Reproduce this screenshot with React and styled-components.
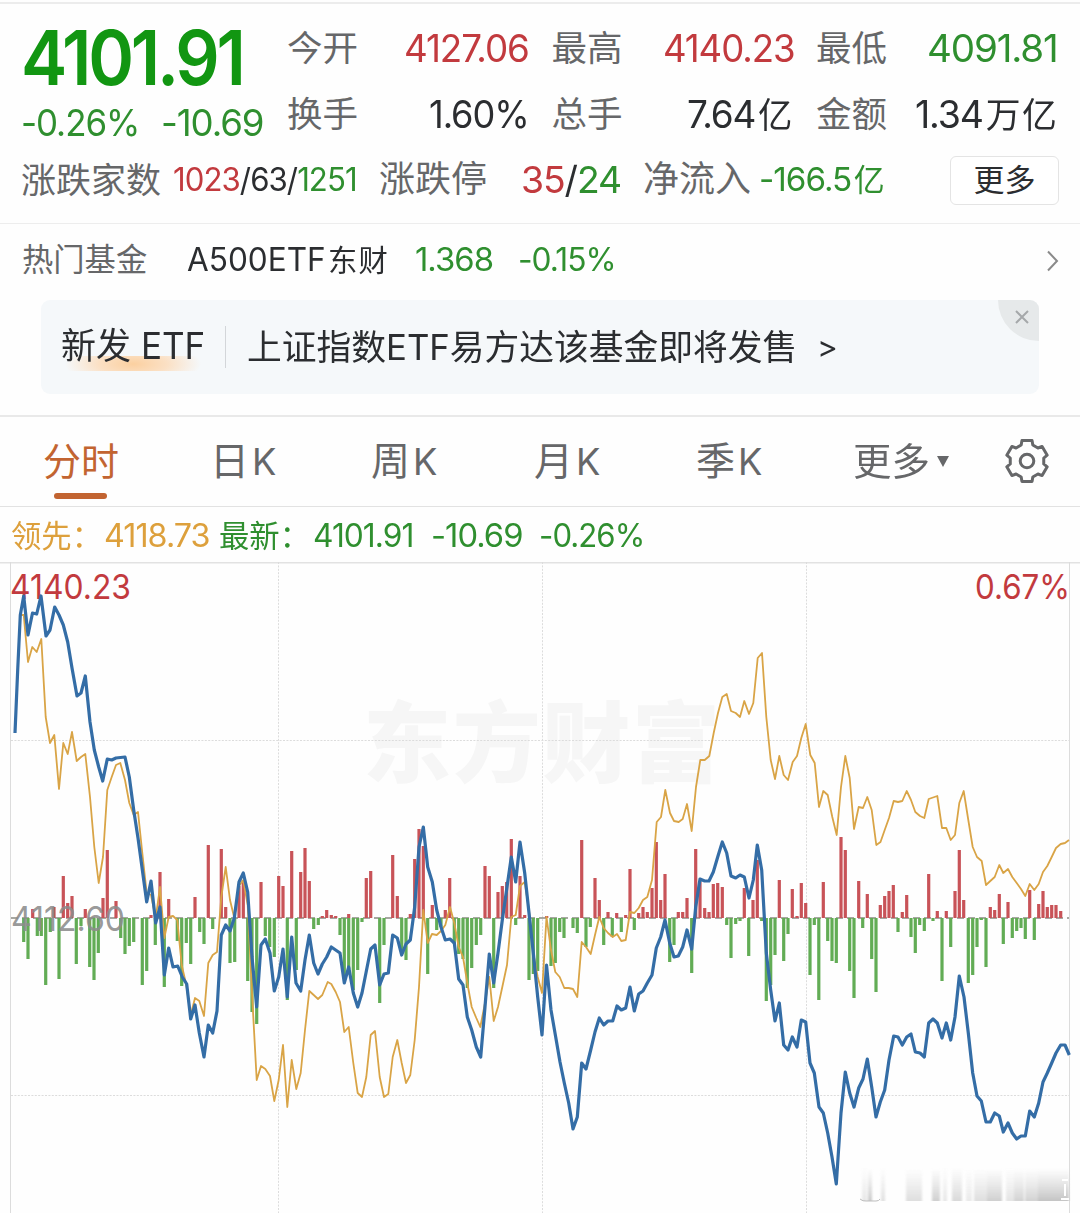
import React, { useLayoutEffect, useRef, useState } from "react";
import styled, { createGlobalStyle } from "styled-components";

const RED = "#c23a3e";
const GREEN = "#2f8f2f";
const INK = "#2b2d30";
const MUTED = "#666769";

const GlobalStyle = createGlobalStyle`
  * { box-sizing: border-box; }
  body { margin: 0; background: #fefefe; font-family: Inter, "Noto Sans CJK SC", sans-serif; }
`;

const Page = styled.main`
  width: 1080px;
  height: 1213px;
  overflow: hidden;
  display: flex;
  flex-direction: column;
  border-top: 2px solid #fefefe;
`;

/* Text stretched to a given advance width */
const Slot = styled.span`
  display: block;
  flex: none;
  width: ${(p) => p.$w}px;
  margin-left: ${(p) => p.$ml || 0}px;
  font-size: ${(p) => p.$size}px;
  font-weight: ${(p) => p.$weight || 400};
  color: ${(p) => p.$color || "inherit"};
  line-height: 1.2;
  white-space: nowrap;
`;
const Stretch = styled.span`
  display: block;
  width: max-content;
  transform-origin: 0 50%;
  letter-spacing: ${(p) => p.$ls}em;
`;
function Fit({ w, ml, size, weight, color, ls = -0.03, children }) {
  const ref = useRef(null);
  const [scale, setScale] = useState(1);
  useLayoutEffect(() => {
    setScale(w / ref.current.offsetWidth);
  }, [w]);
  return (
    <Slot $w={w} $ml={ml} $size={size} $weight={weight} $color={color}>
      <Stretch ref={ref} $ls={ls} style={{ transform: `scaleX(${scale})` }}>
        {children}
      </Stretch>
    </Slot>
  );
}
const Tint = styled.span`
  color: ${(p) => p.$color};
`;
const Unit = styled.span`
  margin-left: 0.08em;
  font-size: 0.93em;
  letter-spacing: 0.04em;
`;

const Quote = styled.section`
  height: 222px;
  border-top: 2px solid #ececec;
  border-bottom: 1px solid #ededed;
  padding: 12px 21px 0;
`;
const QuoteTop = styled.div`
  display: flex;
  height: 132px;
`;
const Headline = styled.div`
  width: 266px;
  display: flex;
  flex-direction: column;
`;
const Price = styled.div`
  height: 84px;
  display: flex;
  align-items: center;
`;
const Change = styled.div`
  height: 47px;
  display: flex;
  align-items: center;
`;
const Stats = styled.div`
  flex: 1;
  display: grid;
  grid-template-columns: 242px 242px 242px;
  column-gap: 22.5px;
  grid-template-rows: 66px 66px;
`;
const Stat = styled.div`
  display: flex;
  align-items: center;
  justify-content: space-between;
`;
const Breadth = styled.div`
  height: 64px;
  display: flex;
  align-items: center;
`;
const MoreButton = styled.button`
  width: 109px;
  height: 49px;
  margin-left: auto;
  padding: 0;
  display: flex;
  align-items: center;
  justify-content: center;
  background: #fff;
  border: 1.5px solid #e4e4e4;
  border-radius: 6px;
  color: ${INK};
  font-family: inherit;
`;

const FundRow = styled.section`
  height: 76px;
  padding: 0 22px 3px;
  display: flex;
  align-items: center;
  svg { margin-left: auto; margin-right: -1px; }
`;
const Banner = styled.section`
  position: relative;
  width: 998px;
  height: 94px;
  margin: 0 0 21px 41px;
  padding-left: 20px;
  display: flex;
  align-items: center;
  background: #f5f8fa;
  border-radius: 9px;
  color: ${INK};
`;
const BannerTag = styled.div`
  height: 94px;
  display: flex;
  align-items: center;
  background: radial-gradient(ellipse 68px 22px at 72px 8px, #fbd0a0 0%, #fbe0c4 50%, rgba(245, 248, 250, 0) 100%) 0 56px / 144px 15px no-repeat;
`;
const Divider = styled.div`
  width: 1px;
  height: 42px;
  margin-left: 20px;
  background: #d3d6d9;
`;
const CloseTab = styled.div`
  position: absolute;
  top: 0;
  right: 0;
  width: 41px;
  height: 41px;
  padding: 10px 0 0 17px;
  background: #e6e9ea;
  border-radius: 0 9px 0 41px;
  svg { display: block; }
`;

const Tabs = styled.nav`
  height: 92px;
  border-top: 2px solid #e9e9e9;
  border-bottom: 1px solid #e2e2e2;
  display: grid;
  grid-template-columns: repeat(6, 162px) 1fr;
`;
const Tab = styled.div`
  display: flex;
  align-items: center;
  justify-content: center;
  position: relative;
  padding-left: ${(p) => p.$shift || 0}px;
  color: ${(p) => (p.$active ? "#c26431" : MUTED)};
  &::after {
    content: "";
    display: ${(p) => (p.$active ? "block" : "none")};
    position: absolute;
    left: 54px;
    bottom: 7px;
    width: 53px;
    height: 6px;
    border-radius: 3px;
    background: #c26431;
  }
`;
const Caret = styled.span`
  width: 0;
  height: 0;
  margin-left: 7px;
  border: 6.5px solid transparent;
  border-top: 11px solid ${MUTED};
  border-bottom: 0;
`;
const Settings = styled.div`
  display: flex;
  align-items: center;
  padding: 0 0 2px 30.500px;
`;

const Legend = styled.section`
  height: 55px;
  padding: 3px 0 0 11px;
  display: flex;
  align-items: center;
`;
const ChartSvg = styled.svg`
  display: block;
  flex: none;
  font-family: Inter, "Noto Sans CJK SC", sans-serif;
`;

/* x centre and signed height of every volume-delta bar */
const BARS = [
  [32.7,9],[54,11],[63.3,42],[67.7,15],[72,22],[85.3,9],[103,20],[107.3,68],[116,17],[151,3],[160,46],[168.7,19],[195,21],[208.3,73],[221.3,69],[225.7,11],[239,32],[243.3,38],[261,36],
  [23.7,-24],[28,-41],[37.3,-18],[41.3,-18],[45.7,-67],[50.3,-14],[59,-61],[76.3,-46],[81,-8],[89.7,-49],[94,-62],[98.3,-35],[120.7,-20],[125,-36],[129.3,-28],[133.7,-24],[142.3,-67],[146.7,-53],[155.3,-27],[164.3,-69],[177.3,-23],[181.7,-68],[186.3,-25],[190.7,-46],[199.7,-14],[204,-26],[212.7,-11],[230,-45],[234.7,-44],[247.7,-63],[252,-94],[256.7,-106],[265.3,-18],[269.7,-29],
  [278.7,42],[283,32],[291.7,67],[300.7,46],[305,70],[309.3,37],[322.3,2],[326.7,8],[331.3,3],[335.7,2],[348.7,4],[366.3,40],[370.7,47],[392.7,63],[397.3,22],[410.3,4],[414.7,59],[419,89],[423.3,72],[432.3,13],[445.3,8],[449.7,40],[485,52],[489.3,42],[498,26],[502.3,32],[506.7,36],[511.3,79],[520,42],[524.7,3],[546.7,2],
  [274.3,-39],[287.3,-82],[296.3,-52],[313.7,-11],[318.3,-7],[340,-17],[344.3,-61],[348.7,-51],[353.3,-72],[357.7,-52],[362,-4],[379.7,-85],[384,-27],[401.7,-34],[406,-42],[427.7,-56],[436.7,-12],[441,-9],[454.3,-26],[458.7,-36],[463,-41],[467.3,-70],[471.7,-50],[476.3,-27],[480.7,-17],[493.7,-70],[515.7,-7],[529,-62],[533.3,-56],[537.7,-53],
  [581.7,78],[595,40],[599.3,18],[608,6],[616.7,5],[625.7,3],[630,49],[638.7,5],[643,11],[647.3,6],[652,30],[656.3,76],[660.7,18],[665,44],[678.3,6],[682.7,6],[687,20],[695.7,69],[700,36],[704.7,10],[709,6],[713.3,34],[717.7,35],[722.3,31],[744.3,30],[753,18],[757.3,58],[779.3,38],[792.3,29],[797,2],[801.3,35],[805.7,15],
  [551,-48],[555.3,-45],[559.7,-14],[564,-20],[573,-10],[577.3,-15],[586,-29],[590.3,-9],[603.7,-27],[612.3,-19],[621.3,-14],[634.3,-12],[669.7,-44],[674,-27],[691.7,-55],[726.7,-7],[731,-40],[735.7,-6],[740,-3],[748.7,-38],[761.7,-3],[766.3,-83],[770.7,-67],[775,-37],[783.7,-43],[788,-16],[810,-57],[814.3,-7],[818.8,-82],
  [823.3,36],[841,81],[845.3,68],[858.7,37],[867.3,24],[880.3,13],[884.7,22],[889,27],[893.3,33],[902.3,6],[906.7,23],[928.7,44],[937.3,7],[946.3,7],[955,27],[959.3,68],[963.7,18],[990.3,11],[994.7,8],[999.3,24],[1008,16],[1029.7,28],[1038.7,14],[1043,27],[1047.3,11],[1051.7,13],[1056,13],[1060.7,7],
  [827.7,-23],[832,-43],[836.3,-45],[849.7,-53],[854,-80],[862.7,-10],[871.7,-41],[876,-74],[898,-14],[911,-19],[915.3,-35],[919.7,-7],[924.3,-13],[933,-3],[942,-63],[950.7,-29],[968.3,-65],[972.7,-57],[977,-29],[981.3,-2],[986,-49],[1003.3,-26],[1012.3,-20],[1016.7,-13],[1021,-10],[1025.3,-21],[1034.3,-22],
];

const INDEX_LINE =
  "15,733 17.7,670 20.3,615 23.7,596 28,635 32.5,613 36.7,614 41,596 46,636 50,630 54.7,607 59,615 63.3,625 67.7,642 72,668 77,696 81,693 85.3,676 90,722 94.3,750 98.7,767 102.7,781 107.3,759 111.7,760 116,758 125,757 129.3,777 133.7,810 138,838 146.7,902 151,881 155.7,923 160,907 164.3,975 168.7,948 173,967 177.7,966 182.3,977 186.7,984 190.7,1019 195,1005 199.3,1033 204,1057 208.3,1025 212.7,1033 217,1011 221.3,935 225.7,925 230,931 234.3,918 239,882 243.3,873 247.7,892 252,957 256.7,1007 261,945 265.3,939 270,953 274.3,991 278.7,977 283,949 287.3,997 291.7,937 296,983 300.7,991 305,960 309.3,935 313.7,963 318,974 322.3,964 326.7,957 331.3,947 340,953 344.3,983 348.7,967 353.3,993 357.7,1007 362,993 370.7,949 375,945 379.7,985 384,974 388.3,973 392.7,935 397.3,938 401.7,955 406,944 410.3,940 414.7,907 419,847 423.3,827 427.7,867 432.3,882 436.7,910 441,927 445.3,940 450,939 454.3,943 458.7,979 463,985 467.3,1017 471.7,1030 476.3,1047 480.7,1057 485,1007 489.3,954 493.7,983 498,953 502.3,920 507,887 511.3,857 515.7,882 520,842 524.7,873 529,913 533.3,953 537.7,997 542,1035 546.5,965 551,1010 555.7,1037 560,1062 564.3,1083 568.7,1103 573,1129 577.3,1117 581.7,1063 586,1069 590.7,1050 595,1032 599.3,1018 603.7,1025 608,1021 612.7,1021 617,1006 621.3,1010 625.7,1008 630,987 634.3,1011 638.7,994 643,991 647.3,983 652,975 656.3,948 660.7,937 665,920 669.7,943 674,957 678.3,956 682.7,947 687,930 691.7,949 695.7,907 700,879 704.7,881 709,881 713.3,872 717.7,857 722.3,842 726.7,853 731,876 735.7,878 740,875 744.3,877 749,898 753.3,880 757.3,845 761.7,870 766.3,953 770.7,990 775,1021 779.3,1003 783.7,1045 788,1050 792.3,1037 797,1047 801.3,1020 805.7,1022 810,1063 814.3,1073 819,1107 823.3,1113 827.7,1133 832,1157 836.3,1184 841,1113 845.3,1072 849.7,1093 854,1107 858.7,1088 863,1079 867.3,1059 871.7,1087 876,1117 880.3,1102 884.7,1090 889,1060 893.7,1036 898,1037 902.3,1045 906.7,1037 911,1034 915.3,1052 920,1053 924.3,1057 928.7,1023 933,1019 937.3,1023 942,1038 946.3,1023 950.7,1040 955,1017 959.3,976 964,997 968.3,1033 972.7,1073 977,1096 981.3,1101 986,1122 990.3,1122 994.7,1113 999.3,1116 1003.3,1132 1008,1123 1012.3,1133 1016.7,1139 1021,1136 1025.3,1136 1029.7,1111 1034.3,1117 1038.7,1103 1043,1082 1047.3,1073 1051.7,1063 1056,1053 1060.7,1045 1065,1045 1069.3,1055";

const LEAD_LINE =
  "20.3,615 23.7,615 28,662 32.3,647 36.7,652 41.3,639 45.7,717 50,743 54.3,735 59,789 63.3,743 67.7,754 72,732 76.7,761 81,757 85.3,754 90,797 94.3,847 98.7,883 103,857 107.3,790 111.7,777 116,765 120.3,763 125,780 129.3,803 133.7,815 138,812 142.3,853 146.7,893 151,895 155.7,918 160,887 164.3,938 168.7,917 173,916 177.3,920 181.7,965 186.3,985 190.7,1015 195,998 199.3,1001 204,1016 208.3,963 212.7,955 217,952 221.3,897 225.7,867 230,900 234.3,918 239,886 243.3,880 247.7,905 252,993 256.7,1080 261,1066 265.3,1069 270,1076 274.3,1101 278.7,1080 283,1045 287.3,1107 291.7,1060 296.3,1089 300.7,1073 305,1030 309.3,991 313.7,995 318,999 322.3,995 327.7,982 331.3,984 335.7,992 340,1002 344.3,1032 348.7,1027 353.3,1063 357.7,1093 362,1097 366.3,1077 370.7,1035 375,1031 379.7,1077 384,1097 388.3,1094 392.7,1057 397.3,1040 401.7,1063 406,1083 410.3,1075 414.7,1040 419,987 423.3,910 427.7,943 432,934 436.7,935 441,931 445.3,925 450,907 454.3,923 458.7,947 463,957 467.3,983 471.7,1007 476.3,1018 480.3,1027 485,1003 489.3,977 493.7,1021 498,1007 502.3,987 507,965 511.3,917 515.7,915 520,886 524.7,882 529,910 533.3,953 537.7,977 542,993 546.5,917 551,950 555.3,972 559.7,977 564.3,988 568.7,988 573,989 577.3,997 581.7,942 586,947 590.7,954 595,935 599.3,917 603.7,928 608,933 612.7,937 617,934 621.3,941 625.7,940 630,912 634.3,913 638.7,908 643,900 647.3,897 652,880 656.7,822 661,817 665.3,790 670,813 674,821 678.7,822 682.7,819 687,804 691.7,831 696,787 700.3,760 704.7,760 709.3,756 713.7,733 718,713 722.3,697 726.7,694 731,711 735.7,713 740,717 744.3,701 749,714 753.3,703 757.7,658 762,653 766.3,717 770.7,760 775,779 779.3,756 783.7,775 788,780 792.7,762 797,756 801.3,738 805.7,724 810.3,755 814.7,763 819,807 823.3,791 827.7,795 832.3,817 836.7,835 841,787 845.3,756 849.7,778 854,829 858.7,807 863,808 867.3,797 871.7,810 876.3,845 880.5,842 884.7,830 889,818 893.7,801 898,802 902.3,801 906.7,791 911,800 915.3,812 920,816 924.3,818 928.7,799 937.3,796 942,828 946.3,828 950.7,840 955,835 959.3,803 963.7,791 968.3,820 972.7,847 977,857 981.7,861 986,885 990.3,881 994.7,877 999.3,865 1003.3,873 1008,869 1012.3,877 1016.7,883 1021,889 1025.3,896 1029.7,884 1034.3,890 1038.7,884 1043,872 1047.3,866 1051.7,857 1056,848 1060.7,844 1065,843 1069,840";

/* x, width and opacity of the streaks in the faded source mark */
const STREAKS = [
  [862, 5, 0.4], [868, 4, 0.9], [881, 4, 0.5], [906, 16, 0.55], [932, 8, 0.8], [943, 4, 0.4],
  [952, 10, 0.65], [966, 6, 0.35], [974, 13, 0.55], [987, 15, 0.8], [1006, 8, 0.45], [1014, 10, 0.75],
  [1025, 13, 0.75], [1038, 31, 1],
];

function Gear() {
  const pts = [];
  for (let k = 0; k < 6; k++) {
    const base = -90 + k * 60;
    [[17, -20], [21, -14], [21, 14], [17, 20]].forEach(([r, d]) => {
      const a = ((base + d) * Math.PI) / 180;
      pts.push(`${(24 + r * Math.cos(a)).toFixed(2)},${(24 + r * Math.sin(a)).toFixed(2)}`);
    });
  }
  return (
    <svg width="48" height="48" fill="none" stroke={MUTED} strokeWidth="3" strokeLinejoin="round">
      <polygon points={pts.join(" ")} />
      <circle cx="24" cy="24" r="6.8" />
    </svg>
  );
}

function Chart() {
  return (
    <ChartSvg width="1080" height="651" viewBox="0 562 1080 651">
      <defs>
        <linearGradient id="fade" x1="0" y1="0" x2="0" y2="1">
          <stop offset="0" stopColor="#d0d0d0" stopOpacity="0" />
          <stop offset="1" stopColor="#c4c4c4" />
        </linearGradient>
        <filter id="soft" x="-5%" y="-5%" width="110%" height="110%">
          <feGaussianBlur stdDeviation="1.2 0.4" />
        </filter>
      </defs>
      <text x="363" y="775" fontSize="88" fontWeight="900" fill="#f6f6f6" textLength="357">东方财富</text>
      <g stroke="#dcdcdc" strokeWidth="1" fill="none">
        <path d="M0 562.5H1080" stroke="#e2e2e2" strokeWidth="2" />
        <path d="M10.5 562V1213M1069.5 562V1213" />
        <path d="M278.5 562V1213M542.5 562V1213M806.5 562V1213M11 740.5H1069M11 1095.5H1069" strokeDasharray="2 1.4" />
      </g>
      <path d="M11 918H1069" stroke="#8b8b83" strokeWidth="1.3" strokeDasharray="7 4" />
      {BARS.map(([x, h]) => (
        <rect
          key={x}
          x={x - 1.6}
          y={h > 0 ? 918 - h : 918}
          width="3.2"
          height={Math.abs(h)}
          fill={h > 0 ? "#c85358" : "#62ac55"}
        />
      ))}
      <text x="11" y="930.5" fontSize="34" fill="#8c8c8c" fillOpacity="0.9" textLength="114" lengthAdjust="spacingAndGlyphs">4112.60</text>
      <text x="10" y="599" fontSize="34.5" fill={RED} textLength="121" lengthAdjust="spacingAndGlyphs">4140.23</text>
      <text x="975" y="599" fontSize="34.5" fill={RED} textLength="95" lengthAdjust="spacingAndGlyphs">0.67%</text>
      <polyline points={LEAD_LINE} fill="none" stroke="#d9a446" strokeWidth="1.8" strokeLinejoin="round" />
      <polyline points={INDEX_LINE} fill="none" stroke="#346da6" strokeWidth="3.2" strokeLinejoin="round" />
      <g filter="url(#soft)">
        {STREAKS.map(([x, w, o]) => (
          <rect key={x} x={x} y="1168" width={w} height="33" fill="url(#fade)" opacity={o} />
        ))}
      </g>
      <path d="M860 1199q3 2.500 6 2h10q3 0 4-2" fill="none" stroke="#bdbdbd" strokeWidth="1" />
      <path d="M1062 1180h6M1065 1184v12M1061 1199h8" fill="none" stroke="#fff" strokeWidth="2" />
    </ChartSvg>
  );
}

function StatItem({ label, value, unit, w, color }) {
  return (
    <Stat>
      <Fit w={71} size={35.5} ls={0} color={MUTED}>{label}</Fit>
      <Fit w={w} size={38} color={color}>{value}{unit && <Unit>{unit}</Unit>}</Fit>
    </Stat>
  );
}

export default function App() {
  return (
    <Page>
      <GlobalStyle />
      <Quote>
        <QuoteTop>
          <Headline>
            <Price><Fit w={222} size={76} weight={600} ls={-0.045} color="#129612">4101.91</Fit></Price>
            <Change>
              <Fit w={118} size={37} color={GREEN}>-0.26%</Fit>
              <Fit w={102} ml={22} size={37} color={GREEN}>-10.69</Fit>
            </Change>
          </Headline>
          <Stats>
            <StatItem label="今开" value="4127.06" w={125} color={RED} />
            <StatItem label="最高" value="4140.23" w={131} color={RED} />
            <StatItem label="最低" value="4091.81" w={131} color={GREEN} />
            <StatItem label="换手" value="1.60%" w={100} color={INK} />
            <StatItem label="总手" value="7.64" unit="亿" w={107} color={INK} />
            <StatItem label="金额" value="1.34" unit="万亿" w={143} color={INK} />
          </Stats>
        </QuoteTop>
        <Breadth>
          <Fit w={140} size={35} ls={0} color={MUTED}>涨跌家数</Fit>
          <Fit w={184} ml={12} size={32} color={INK}>
            <Tint $color={RED}>1023</Tint>/63/<Tint $color={GREEN}>1251</Tint>
          </Fit>
          <Fit w={108} ml={22} size={36} ls={0} color={MUTED}>涨跌停</Fit>
          <Fit w={100} ml={34} size={37} color={INK}>
            <Tint $color={RED}>35</Tint>/<Tint $color={GREEN}>24</Tint>
          </Fit>
          <Fit w={108} ml={22} size={36} ls={0} color={MUTED}>净流入</Fit>
          <Fit w={127} ml={8} size={33} color={GREEN}>-166.5<Unit>亿</Unit></Fit>
          <MoreButton><Fit w={62} size={31} ls={0}>更多</Fit></MoreButton>
        </Breadth>
      </Quote>
      <FundRow>
        <Fit w={125} size={31.3} ls={0} color={MUTED}>热门基金</Fit>
        <Fit w={202} ml={40} size={32} ls={0} color={INK}>A500ETF<Unit>东财</Unit></Fit>
        <Fit w={78} ml={26} size={32} color={GREEN}>1.368</Fit>
        <Fit w={98} ml={25} size={32} color={GREEN}>-0.15%</Fit>
        <svg width="14" height="22" fill="none" stroke="#8a8a8a" strokeWidth="2">
          <path d="M3 1.500 12 11 3 20.500" />
        </svg>
      </FundRow>
      <Banner>
        <BannerTag><Fit w={144} size={36.5} ls={0}>新发 ETF</Fit></BannerTag>
        <Divider />
        <Fit w={550} ml={21} size={35} ls={0}>上证指数ETF易方达该基金即将发售</Fit>
        <Fit w={21} ml={20} size={30} ls={0}>{">"}</Fit>
        <CloseTab>
          <svg width="14" height="14" fill="none" stroke="#a5a8aa" strokeWidth="2">
            <path d="M1 1 13 13M13 1 1 13" />
          </svg>
        </CloseTab>
      </Banner>
      <Tabs>
        <Tab $active><Fit w={76} size={38} ls={0}>分时</Fit></Tab>
        <Tab $shift={2}><Fit w={68} size={39} ls={0}>日<Unit>K</Unit></Fit></Tab>
        <Tab><Fit w={68} size={39} ls={0}>周<Unit>K</Unit></Fit></Tab>
        <Tab $shift={2}><Fit w={68} size={39} ls={0}>月<Unit>K</Unit></Fit></Tab>
        <Tab $shift={2}><Fit w={68} size={39} ls={0}>季<Unit>K</Unit></Fit></Tab>
        <Tab $shift={19}><Fit w={77} size={38} ls={0}>更多</Fit><Caret /></Tab>
        <Settings><Gear /></Settings>
      </Tabs>
      <Legend>
        <Fit w={91} size={31} ls={0} color="#dda03c">领先：</Fit>
        <Fit w={106} ml={2} size={32} color="#dda03c">4118.73</Fit>
        <Fit w={91} ml={9} size={31} ls={0} color={GREEN}>最新：</Fit>
        <Fit w={100} ml={3} size={32} color={GREEN}>4101.91</Fit>
        <Fit w={91} ml={18} size={32} color={GREEN}>-10.69</Fit>
        <Fit w={105} ml={17} size={32} color={GREEN}>-0.26%</Fit>
      </Legend>
      <Chart />
    </Page>
  );
}
